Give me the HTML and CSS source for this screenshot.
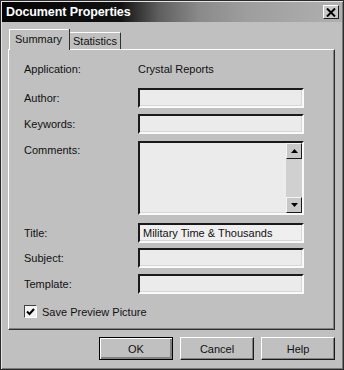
FILE: index.html
```html
<!DOCTYPE html>
<html lang="en">
<head>
    <meta charset="UTF-8">
    <meta name="viewport" content="width=device-width, initial-scale=1.0">
    <title>Document Properties</title>
    <link rel="stylesheet" href="styles.css">
</head>
<body>
<div class="window">
    <div class="titlebar">
        <span class="title">Document Properties</span>
        <span class="close">
            <svg width="10" height="9" viewBox="0 0 10 9"><path d="M1 0.5 L9 8.5 M9 0.5 L1 8.5" stroke="#000" stroke-width="2"/></svg>
        </span>
    </div>

    <div class="content">
        <div class="tabs">
            <div class="tab active">Summary</div>
            <div class="tab">Statistics</div>
        </div>

        <div class="panel">
            <div class="row row-app">
                <span class="label">Application:</span>
                <span class="value">Crystal Reports</span>
            </div>
            <div class="row row-author">
                <span class="label">Author:</span>
                <div class="field"></div>
            </div>
            <div class="row row-keywords">
                <span class="label">Keywords:</span>
                <div class="field"></div>
            </div>
            <div class="row row-comments">
                <span class="label">Comments:</span>
                <div class="field memo">
                    <div class="scrollbar">
                        <div class="arrow"><svg width="7" height="4" viewBox="0 0 7 4"><path d="M0 4 L3.5 0 L7 4 Z" fill="#000"/></svg></div>
                        <div class="track"></div>
                        <div class="arrow"><svg width="7" height="4" viewBox="0 0 7 4"><path d="M0 0 L7 0 L3.5 4 Z" fill="#000"/></svg></div>
                    </div>
                </div>
            </div>
            <div class="row row-title">
                <span class="label">Title:</span>
                <div class="field filled">Military Time &amp; Thousands</div>
            </div>
            <div class="row row-subject">
                <span class="label">Subject:</span>
                <div class="field"></div>
            </div>
            <div class="row row-template">
                <span class="label">Template:</span>
                <div class="field"></div>
            </div>
            <div class="check-row">
                <span class="checkbox">
                    <svg width="9" height="8" viewBox="0 0 9 8"><path d="M1 3.5 L3.5 6 L8 1" stroke="#000" stroke-width="2" fill="none"/></svg>
                </span>
                <span class="check-label">Save Preview Picture</span>
            </div>
        </div>

        <div class="buttons">
            <button class="btn default">OK</button>
            <button class="btn">Cancel</button>
            <button class="btn">Help</button>
        </div>
    </div>
</div>
</body>
</html>
```

FILE: styles.css
```css
body {
    margin: 0;
    background: #c0c0c0;
    font-family: "Liberation Sans", Arial, sans-serif;
    font-size: 11px;
    color: #111;
}

.window {
    width: 344px;
    height: 370px;
    box-sizing: border-box;
    border: 1px solid #2a2a2a;
    box-shadow: inset 1px 1px #e4e4e4, inset -1px -1px #7a7a7a;
    padding: 1px;
    background: #c0c0c0;
}

.titlebar {
    height: 20px;
    display: flex;
    align-items: center;
    justify-content: space-between;
    background: linear-gradient(to right, #050505 0%, #121212 35%, #5e5e5e 46%, #8a8a8a 58%, #9e9e9e 72%, #b0b0b0 100%);
    padding: 0 3px 0 4px;
}

.title {
    color: #fff;
    font-weight: bold;
    font-size: 12.5px;
    letter-spacing: -0.1px;
}

.close {
    width: 14px;
    height: 12px;
    display: flex;
    align-items: center;
    justify-content: center;
    background: #c8c8c8;
    border: 1px solid;
    border-color: #fff #202020 #202020 #fff;
}

.content {
    padding: 0 7px 0 6px;
}

.tabs {
    display: flex;
    align-items: flex-end;
    margin-top: 7px;
    padding-left: 1px;
    height: 20px;
}

.tab {
    height: 16px;
    line-height: 16px;
    padding: 0 3px;
    border: 1px solid;
    border-color: #fff #303030 transparent #fff;
    border-bottom: none;
    background: #c0c0c0;
}

.tab.active {
    height: 20px;
    line-height: 19px;
    width: 48px;
    padding: 0 5px;
    margin-bottom: -1px;
    position: relative;
    z-index: 1;
    border-right-color: #c0c0c0;
    box-shadow: 1px 0 #303030;
}

.panel {
    height: 281px;
    box-sizing: border-box;
    border: 1px solid;
    border-color: #fff #303030 #303030 #fff;
    box-shadow: inset -1px -1px #808080;
    padding: 8px 15px 0 15px;
}

.row {
    display: grid;
    grid-template-columns: 114px 166px;
    align-items: center;
    height: 20px;
}

.row-app { height: 22px; }
.row-author { margin-top: 8px; }
.row-keywords { margin-top: 6px; }
.row-comments { margin-top: 7px; height: 74px; align-items: start; }
.row-comments .label { padding-top: 3px; }
.row-title { margin-top: 8px; }
.row-subject { margin-top: 5px; }
.row-template { margin-top: 6px; }

.field {
    height: 20px;
    box-sizing: border-box;
    background: #ebebeb;
    border: 2px solid;
    border-color: #1a1a1a #fafafa #fafafa #1a1a1a;
    box-shadow: inset -1px -1px #d6d6d6;
    padding: 0 3px;
    line-height: 16px;
}

.field.filled {
    background: #efefef;
}

.memo {
    height: 74px;
    display: flex;
    justify-content: flex-end;
    padding: 0;
}

.scrollbar {
    width: 16px;
    display: flex;
    flex-direction: column;
    background: #d0d0d0;
}

.arrow {
    width: 16px;
    height: 16px;
    box-sizing: border-box;
    display: flex;
    align-items: center;
    justify-content: center;
    background: #c8c8c8;
    border: 1px solid;
    border-color: #f4f4f4 #1a1a1a #1a1a1a #f4f4f4;
}

.track {
    flex: 1;
}

.check-row {
    display: flex;
    align-items: center;
    gap: 5px;
    margin-top: 11px;
}

.checkbox {
    width: 13px;
    height: 13px;
    box-sizing: border-box;
    display: flex;
    align-items: center;
    justify-content: center;
    background: #f2f2f2;
    border: 1px solid;
    border-color: #404040 #fff #fff #404040;
}

.buttons {
    display: flex;
    justify-content: flex-end;
    gap: 7px;
    margin-top: 7px;
}

.btn {
    width: 74px;
    height: 23px;
    box-sizing: border-box;
    font-family: "Liberation Sans", Arial, sans-serif;
    font-size: 11px;
    color: #111;
    background: #c0c0c0;
    border: 1px solid;
    border-color: #fff #1a1a1a #1a1a1a #fff;
    box-shadow: inset -1px -1px #808080;
    padding: 0;
}

.btn.default {
    border: 1px solid #000;
    box-shadow: inset 1px 1px #fff, inset -2px -2px #808080;
}
```
